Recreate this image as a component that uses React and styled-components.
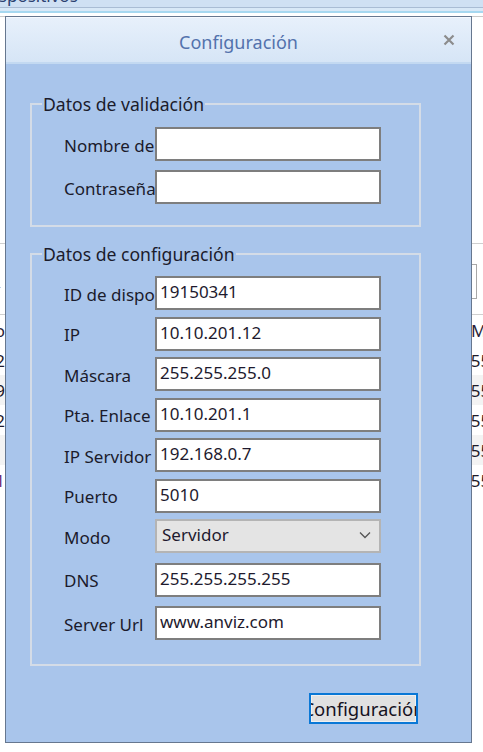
import React from 'react'
import styled, { createGlobalStyle } from 'styled-components'

const GlobalStyle = createGlobalStyle`
  html, body {
    margin: 0;
    padding: 0;
    background: #ffffff;
  }
  body {
    font-family: "Noto Sans", "Open Sans", sans-serif;
  }
`;

const validacion = [
  { label: 'Nombre de usuario', value: '' },
  { label: 'Contraseña', value: '' },
];

const configuracion = [
  { label: 'ID de dispositivo', value: '19150341' },
  { label: 'IP', value: '10.10.201.12' },
  { label: 'Máscara', value: '255.255.255.0' },
  { label: 'Pta. Enlace', value: '10.10.201.1' },
  { label: 'IP Servidor', value: '192.168.0.7' },
  { label: 'Puerto', value: '5010' },
  { label: 'Modo', value: 'Servidor', combo: true },
  { label: 'DNS', value: '255.255.255.255', spaced: true },
  { label: 'Server Url', value: 'www.anviz.com', spaced: true },
];

const dispositivos = [
  { ip: '192.168.1.2', mask: '255.255.255.0' },
  { ip: '10.10.201.9', mask: '255.255.255.0' },
  { ip: '192.168.0.2', mask: '255.255.255.0' },
  { ip: '', mask: '255.255.255.0' },
  { ip: '10.10.200.1', mask: '255.255.255.0', mark: true },
];

const App = () => {
  return (
    <Desktop>
      <GlobalStyle />

      {/* ventana principal, detrás del diálogo */}
      <MainWindow>
        <Ribbon>
          <RibbonTitle>Dispositivos</RibbonTitle>
        </Ribbon>
        <RibbonEdge />
        <Filler />
        <Toolbar>
          <ToolLink>Configuración</ToolLink>
          <SearchBox />
        </Toolbar>
        <Table>
          <HeadCell>Nº dispositivo</HeadCell>
          <span />
          <HeadCell $right $shift={-1}>Máscara</HeadCell>
          {dispositivos.map((d, i) => (
            <React.Fragment key={i}>
              <Cell $odd={i % 2 === 1} $mark={d.mark}>{d.ip}</Cell>
              <Stripe $odd={i % 2 === 1} />
              <Cell $odd={i % 2 === 1} $right $shift={-11}>{d.mask}</Cell>
            </React.Fragment>
          ))}
        </Table>
      </MainWindow>

      <Dialog>
        <TitleBar>
          <Title>Configuración</Title>
          <Close>
            <svg width="12" height="12" viewBox="0 0 12 12">
              <path d="M1.5 1.5 L10.5 10.5 M10.5 1.5 L1.5 10.5" stroke="#8c8c8c" strokeWidth="2.2" fill="none" />
            </svg>
          </Close>
        </TitleBar>

        <Body>
          <Group>
            <Legend>Datos de validación</Legend>
            <Rows $gap={9}>
              {validacion.map((f) => (
                <Row key={f.label}>
                  <Label>{f.label}</Label>
                  <TextBox readOnly defaultValue={f.value} />
                </Row>
              ))}
            </Rows>
          </Group>

          <Group $second>
            <Legend>Datos de configuración</Legend>
            <Rows $gap={6.5}>
              {configuracion.map((f) => (
                <Row key={f.label} $spaced={f.spaced}>
                  <Label>{f.label}</Label>
                  {f.combo ? (
                    <Combo>
                      <span>{f.value}</span>
                      <svg width="12" height="8" viewBox="0 0 12 8">
                        <path d="M1 1.5 L6 6.5 L11 1.5" stroke="#555" strokeWidth="1.3" fill="none" />
                      </svg>
                    </Combo>
                  ) : (
                    <TextBox readOnly defaultValue={f.value} />
                  )}
                </Row>
              ))}
            </Rows>
          </Group>

          <Button>
            <span>Configuración</span>
          </Button>
        </Body>
      </Dialog>
    </Desktop>
  )
}

const Desktop = styled.div`
  position: relative;
  width: 483px;
  height: 752px;
  overflow: hidden;
  background: #ffffff;
`;

const MainWindow = styled.div`
  display: flex;
  flex-direction: column;
  font-family: "Noto Sans", sans-serif;
`;

const Ribbon = styled.div`
  height: 7px;
  background: #cfe0f3;
  border-bottom: 1px solid #a9bcd4;
  overflow: hidden;
`;

const RibbonTitle = styled.div`
  margin: -14px 0 0 -18px;
  font-size: 17px;
  line-height: 20px;
  color: #2b4170;
`;

const RibbonEdge = styled.div`
  height: 3px;
  background: #d8e8f7;
  border-bottom: 2px solid #a6d8f0;
  margin-bottom: 3px;
`;

const Filler = styled.div`
  height: 226px;
  border-top: 1px solid #c9c9c9;
  border-bottom: 1px solid #cfcfcf;
`;

const Toolbar = styled.div`
  height: 70px;
  display: flex;
  align-items: center;
  justify-content: space-between;
  border-bottom: 1px solid #cfcfcf;
`;

const ToolLink = styled.span`
  margin-left: -112px;
  font-size: 17px;
  color: #1a5fb4;
  text-decoration: underline;
`;

const SearchBox = styled.div`
  width: 180px;
  height: 33px;
  margin-right: 6px;
  margin-top: 4px;
  border: 1px solid #a8a8a8;
  background: #fff;
`;

const Table = styled.div`
  display: grid;
  grid-template-columns: 5px 467px 1fr;
  grid-auto-rows: 30px;
`;

const HeadCell = styled.div`
  display: flex;
  align-items: center;
  justify-content: ${(p) => (p.$right ? 'flex-start' : 'flex-end')};
  overflow: ${(p) => (p.$right ? 'visible' : 'hidden')};
  white-space: nowrap;
  margin-left: ${(p) => p.$shift || 0}px;
  font-size: 17px;
  color: #2a1f3a;
`;

const Cell = styled(HeadCell)`
  background: ${(p) => (p.$odd ? '#f3f3f3' : '#ffffff')};
  color: ${(p) => (p.$mark ? '#6b2a7a' : '#1e1a2a')};
`;

const Stripe = styled.div`
  background: ${(p) => (p.$odd ? '#f3f3f3' : '#ffffff')};
`;

const Dialog = styled.div`
  position: absolute;
  left: 5px;
  top: 16px;
  width: 467px;
  height: 727px;
  box-sizing: border-box;
  border: 1px solid #66778f;
  background: #a9c5eb;
  display: flex;
  flex-direction: column;
`;

const TitleBar = styled.div`
  position: relative;
  height: 44px;
  flex-shrink: 0;
  display: flex;
  align-items: center;
  justify-content: center;
  background: linear-gradient(#e7f0fb, #d6e5f6);
  border-top: 1px solid #f6faff;
  border-bottom: 2px solid #c3d9f1;
`;

const Title = styled.div`
  font-size: 18px;
  color: #5372ad;
  margin-top: 3px;
`;

const Close = styled.div`
  position: absolute;
  right: 16px;
  top: 16px;
  display: flex;
`;

const Body = styled.div`
  display: flex;
  flex-direction: column;
  padding: 29px 50px 0 24px;
`;

const Group = styled.fieldset`
  margin: ${(p) => (p.$second ? '16px 0 0' : '0')};
  padding: ${(p) => (p.$second ? '11px 0 24px 32px' : '12px 0 21px 32px')};
  border: 2px solid #d4dce7;
  min-width: 0;
`;

const Legend = styled.legend`
  margin-left: -22px;
  padding: 0 1px;
  font-size: 17.6px;
  line-height: 22px;
  color: #1b1b2b;
`;

const Rows = styled.div`
  display: flex;
  flex-direction: column;
  gap: ${(p) => p.$gap}px;
`;

const Row = styled.div`
  display: flex;
  align-items: center;
  margin-top: ${(p) => (p.$spaced ? '3px' : '0')};
`;

const Label = styled.div`
  width: 91px;
  flex-shrink: 0;
  overflow: hidden;
  white-space: nowrap;
  font-size: 17px;
  line-height: 22px;
  padding-top: 3px;
  color: #1b1b2b;
`;

const TextBox = styled.input`
  box-sizing: border-box;
  width: 226px;
  height: 34px;
  margin: 0;
  padding: 0 0 3px 3px;
  border: 2px solid #7e7e7e;
  background: #ffffff;
  font-family: "Noto Sans", sans-serif;
  font-size: 17px;
  color: #1e1a2e;
  outline: none;
`;

const Combo = styled.div`
  box-sizing: border-box;
  width: 226px;
  height: 34px;
  padding: 0 8px 3px 5px;
  display: flex;
  align-items: center;
  justify-content: space-between;
  border: 2px solid #b4b4b4;
  background: #e4e4e4;
  font-size: 17px;
  color: #1e1a2e;
`;

const Button = styled.div`
  align-self: flex-end;
  margin: 27px 3px 0 0;
  box-sizing: border-box;
  width: 109px;
  height: 31px;
  display: flex;
  align-items: center;
  justify-content: center;
  overflow: hidden;
  white-space: nowrap;
  border: 2px solid #0a78d6;
  box-shadow: inset 0 0 0 1px #f0f0f0;
  background: #e1e1e1;
  font-size: 18.5px;
  color: #15121f;
`;

export default App
